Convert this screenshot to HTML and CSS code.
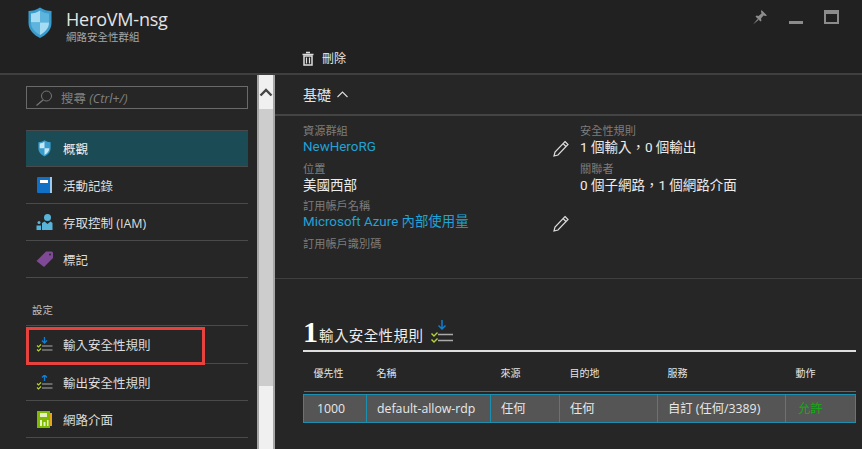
FILE: index.html
```html
<!DOCTYPE html>
<html lang="zh-Hant">
<head>
<meta charset="utf-8">
<title>HeroVM-nsg</title>
<link rel="stylesheet" href="styles.css">
</head>
<body>
<div class="app">
  <header class="top">
    <div class="brand">
      <svg class="brand-icon" width="26" height="32" viewBox="0 0 26 32"><path d="M13 0.5 C9.5 3 5.5 4 1.5 4 V16 C1.5 23 7 28 13 31 C19 28 24.500 23 24.500 16 V4 C20.500 4 16.500 3 13 0.500Z" fill="#3a9bcd"/><path d="M13 3.500 C10 5.500 7 6.500 4 6.500 V15.500 H13Z" fill="#a5dcf3"/><path d="M13 3.500 C16 5.500 19 6.500 22 6.500 V15.500 H13Z" fill="#5db5de"/><path d="M4 15.500 C4 21.500 8.500 25.500 13 28 V15.500Z" fill="#5db5de"/><path d="M22 15.500 C22 21.500 17.500 25.500 13 28 V15.500Z" fill="#a5dcf3"/></svg>
      <div>
        <div class="brand-name">HeroVM-nsg</div>
        <div class="brand-sub">網路安全性群組</div>
      </div>
    </div>
    <div class="win-controls">
      <svg width="16" height="16" viewBox="0 0 16 16"><path d="M9.500 1 L15 6.500 L13.500 7 L11.500 6.500 L9 9.500 L9.500 11.500 L8.500 12.500 L3.500 7.500 L4.500 6.500 L6.500 7 L9.500 4.500 L9 2.500Z M5.500 10 L1 15.500 L6.500 11Z" fill="#8c8c8c"/></svg>
      <span class="win-min"></span>
      <span class="win-max"></span>
    </div>
    <div class="command">
      <svg width="12" height="15" viewBox="0 0 12 15"><path d="M4 1.500H8M0.500 3.500H11.500" stroke="#ddd" stroke-width="1.600" fill="none"/><path d="M2 5H10V14H2Z" fill="none" stroke="#ddd" stroke-width="1.500"/><path d="M4.500 6.500V12.500M7.500 6.500V12.500" stroke="#ddd" stroke-width="1.200"/></svg>
      <span>刪除</span>
    </div>
  </header>

  <div class="body">
    <nav class="side">
      <div class="search">
        <svg width="18" height="16" viewBox="0 0 18 16"><circle cx="11.500" cy="6" r="5" fill="none" stroke="#777" stroke-width="1"/><path d="M8 10 L1.500 15.500" stroke="#777" stroke-width="1.200"/></svg>
        <span>搜尋 <i>(Ctrl+/)</i></span>
      </div>
      <ul class="menu">
        <li class="menu-item active">
          <svg class="mi" width="16" height="17" viewBox="0 0 26 32"><path d="M13 0.500 C9.500 3 5.500 4 1.500 4 V16 C1.500 23 7 28 13 31 C19 28 24.500 23 24.500 16 V4 C20.500 4 16.500 3 13 0.500Z" fill="#3a9bcd"/><path d="M13 3.500 C10 5.500 7 6.500 4 6.500 V15.500 H13Z" fill="#c5e8f7"/><path d="M22 15.500 C22 21.500 17.500 25.500 13 28 V15.500Z" fill="#c5e8f7"/></svg>
          概觀
        </li>
        <li class="menu-item">
          <svg class="mi" width="15" height="16" viewBox="0 0 15 16"><rect width="15" height="16" rx="1" fill="#0f70c5"/><rect x="13" width="2" height="16" fill="#9fc9e8"/><rect x="3" y="3" width="8" height="3" fill="#fff"/></svg>
          活動記錄
        </li>
        <li class="menu-item">
          <svg class="mi" width="16" height="16" viewBox="0 0 16 16"><circle cx="11" cy="3.500" r="3.500" fill="#59b4d9"/><path d="M5.500 16V9L8 7.500L11 10L14 7.500L16 9V16Z" fill="#59b4d9"/><circle cx="2.500" cy="8.500" r="1.500" fill="#59b4d9"/><path d="M0 16V11.500H4.500V16Z" fill="#59b4d9"/></svg>
          存取控制 (IAM)
        </li>
        <li class="menu-item">
          <svg class="mi" width="17" height="16" viewBox="0 0 17 16"><path d="M10 0.500H15.500Q17 0.500 17 2V7L8 16L0.500 10Z" fill="#804998"/><circle cx="14" cy="3.500" r="1" fill="#2b2b2b"/></svg>
          標記
        </li>
      </ul>
      <div class="menu-group">設定</div>
      <ul class="menu menu-settings">
        <li class="menu-item menu-item-first">
          <svg class="mi" width="16" height="15" viewBox="0 0 16 15"><path d="M8 0V6M5.500 3.500L8 6L10.500 3.500" stroke="#0f7fd6" stroke-width="1.300" fill="none"/><path d="M5.500 9H16M5.500 13H16" stroke="#aaa" stroke-width="1.200"/><path d="M0.500 8.500L2 10L4.500 7.500M0.500 12.500L2 14L4.500 11.500" stroke="#b8d432" stroke-width="1.100" fill="none"/></svg>
          輸入安全性規則
          <span class="highlight"></span>
        </li>
        <li class="menu-item">
          <svg class="mi" width="16" height="15" viewBox="0 0 16 15"><path d="M8 6V0M5.500 2.500L8 0L10.500 2.500" stroke="#0f7fd6" stroke-width="1.300" fill="none"/><path d="M5.500 9H16M5.500 13H16" stroke="#aaa" stroke-width="1.200"/><path d="M0.500 8.500L2 10L4.500 7.500M0.500 12.500L2 14L4.500 11.500" stroke="#b8d432" stroke-width="1.100" fill="none"/></svg>
          輸出安全性規則
        </li>
        <li class="menu-item">
          <svg class="mi" width="15" height="17" viewBox="0 0 15 17"><rect width="13" height="17" fill="#7fba00"/><rect x="13" y="2" width="2" height="13" fill="#e8a317"/><rect x="3" y="2" width="7" height="4" fill="#e6f2c4"/><path d="M3 9H5V15H3ZM6.500 11H8.500V15H6.500ZM10 9H11.500V15H10Z" fill="#e6f2c4"/></svg>
          網路介面
        </li>
      </ul>
    </nav>

    <div class="scrollbar">
      <div class="sb-up"><svg width="14" height="9" viewBox="0 0 14 9"><path d="M1.500 7.500L7 2L12.500 7.500" stroke="#444" stroke-width="2.400" fill="none"/></svg></div>
      <div class="sb-thumb"></div>
      <div class="sb-track"></div>
    </div>

    <main class="main">
      <section class="essentials">
        <div class="ess-head">基礎 <svg width="11" height="7" viewBox="0 0 11 7"><path d="M0.500 6L5.500 1L10.500 6" stroke="#ddd" stroke-width="1.100" fill="none"/></svg></div>
        <div class="ess-grid">
          <div class="ess-col">
            <div class="ess-label">資源群組</div>
            <div class="ess-row"><a class="ess-link">NewHeroRG</a><svg class="pencil" width="16" height="17" viewBox="0 0 16 17"><path d="M12 1.500L15 4.500L5 15L1 16L2 12Z M10 3.500L13 6.500" fill="none" stroke="#ddd" stroke-width="1.200"/></svg></div>
            <div class="ess-label">位置</div>
            <div class="ess-value">美國西部</div>
            <div class="ess-label">訂用帳戶名稱</div>
            <div class="ess-row"><a class="ess-link">Microsoft Azure 內部使用量</a><svg class="pencil" width="16" height="17" viewBox="0 0 16 17"><path d="M12 1.500L15 4.500L5 15L1 16L2 12Z M10 3.500L13 6.500" fill="none" stroke="#ddd" stroke-width="1.200"/></svg></div>
            <div class="ess-label">訂用帳戶識別碼</div>
          </div>
          <div class="ess-col">
            <div class="ess-label">安全性規則</div>
            <div class="ess-value">1 個輸入，0 個輸出</div>
            <div class="ess-label">關聯者</div>
            <div class="ess-value">0 個子網路，1 個網路介面</div>
          </div>
        </div>
      </section>
      <section class="rules">
        <h2 class="rules-title"><b>1</b><span>輸入安全性規則</span>
          <svg width="22" height="24" viewBox="0 0 22 24"><path d="M11 0V9M7.500 5.500L11 9L14.500 5.500" stroke="#0f7fd6" stroke-width="1.500" fill="none"/><path d="M7 14.500H22M7 20.500H22" stroke="#aaa" stroke-width="1.600"/><path d="M0.500 13.500L3 16L6.500 12.500M0.500 19.500L3 22L6.500 18.500" stroke="#b8d432" stroke-width="1.400" fill="none"/></svg>
        </h2>
        <table class="rules-table">
          <colgroup><col class="c1"><col class="c2"><col class="c3"><col class="c4"><col class="c5"><col class="c6"></colgroup>
          <thead><tr><th>優先性</th><th>名稱</th><th>來源</th><th>目的地</th><th>服務</th><th>動作</th></tr></thead>
          <tbody>
            <tr class="spacer"><td colspan="6"></td></tr>
            <tr><td class="num">1000</td><td>default-allow-rdp</td><td>任何</td><td>任何</td><td>自訂 (任何/3389)</td><td class="allow">允許</td></tr>
          </tbody>
        </table>
      </section>
    </main>
  </div>
</div>
</body>
</html>
```

FILE: styles.css
```css
* { box-sizing: border-box; }
html, body { margin: 0; height: 100%; }
body {
  background: #262626;
  color: #e6e6e6;
  font-family: "Open Sans", "Noto Sans CJK TC", sans-serif;
  font-size: 12px;
  overflow: hidden;
}
ul { list-style: none; margin: 0; padding: 0; }
.app { width: 862px; height: 449px; display: flex; flex-direction: column; overflow: hidden; }

.top {
  height: 75px;
  flex: none;
  background: #212121;
  border-bottom: 2px solid #3f3f3f;
  display: grid;
  grid-template-columns: 302px 1fr auto;
  grid-template-rows: 44px 1fr;
}
.brand { grid-column: 1 / 3; display: flex; gap: 13px; padding: 7px 0 0 27px; }
.brand-icon { flex: none; }
.brand-name { font-size: 18px; line-height: 20px; margin-top: 2px; color: #e4e4e4; letter-spacing: -0.2px; }
.brand-sub { font-size: 10.500px; line-height: 13px; margin-top: 2px; color: #a6a6a6; }
.win-controls { grid-column: 3; display: flex; align-items: flex-start; gap: 21px; padding: 9px 23px 0 0; }
.win-min { width: 14px; height: 3px; background: #8c8c8c; margin-top: 12px; }
.win-max { width: 15px; height: 14px; border: 2px solid #8c8c8c; border-top-width: 4px; margin-top: 1px; }
.command { grid-column: 2 / 4; grid-row: 2; display: flex; align-items: flex-start; gap: 8px; padding-top: 7px; font-size: 12px; color: #e6e6e6; line-height: 16px; }

.body { flex: 1; display: flex; min-height: 0; }
.side { width: 257px; flex: none; padding: 11px 9px 0 26px; }
.search {
  height: 23px;
  border: 1px solid #6a6a6a;
  display: flex;
  align-items: center;
  gap: 8px;
  padding-left: 8px;
  color: #808080;
  font-size: 12.500px;
}
.search i { font-style: italic; }
.menu { margin-top: 21px; }
.menu-item {
  position: relative;
  height: 37px;
  display: flex;
  align-items: center;
  padding-left: 10px;
  gap: 10px;
  font-size: 12.500px;
  color: #dedede;
  border-bottom: 1px solid #4a4a4a;
}
.menu-item-first { height: 38px; }
.menu-item .mi { flex: none; width: 17px; }
.active { background: #1b4b55; border-top: 1px solid #4a4a4a; color: #eee; height: 37px; }
.menu-group { font-size: 10.500px; color: #bdbdbd; margin-top: 25px; padding-left: 6px; line-height: 14px; height: 22px; }
.menu-settings { margin-top: 0; border-top: 1px solid #4a4a4a; }
.highlight { position: absolute; left: 0; top: 1px; width: 179px; height: 38px; border: 3px solid #e8423f; }

.scrollbar { width: 18px; flex: none; display: flex; flex-direction: column; background: #f0f0f0; border: 1px solid #a6a6a6; border-width: 0 2px; }
.sb-up { height: 34px; display: flex; align-items: center; justify-content: center; }
.sb-thumb { height: 277px; background: #cdcdcd; }
.sb-track { flex: 1; }

.main { flex: 1; min-width: 0; }
.essentials { height: 204px; border-bottom: 1px solid #3f3f3f; padding: 0 0 0 28px; }
.ess-head {
  height: 41px;
  margin-left: -28px;
  padding: 10px 0 0 28px;
  font-size: 14px;
  line-height: 20px;
  border-bottom: 2px solid #444;
  color: #e2e2e2;
  display: flex;
  gap: 6px;
}
.ess-head svg { margin-top: 6px; }
.ess-grid { display: grid; grid-template-columns: 277px 1fr; padding-top: 7px; }
.ess-col { min-width: 0; }
.ess-label { font-size: 11.200px; line-height: 15px; color: #7d7d7d; margin-top: 4.500px; }
.ess-col .ess-label:first-child { margin-top: 0; }
.ess-value { font-family: Roboto, "Noto Sans CJK TC", sans-serif; font-size: 13.500px; line-height: 18px; color: #ececec; }
.ess-row { font-family: Roboto, "Noto Sans CJK TC", sans-serif; display: flex; justify-content: space-between; align-items: center; font-size: 13.400px; line-height: 18px; height: 18px; padding-right: 11px; }
.ess-link { color: #1fa3d8; }
.pencil { flex: none; margin-top: 2px; }

.rules { padding: 38px 6px 0 28px; }
.rules-title {
  margin: 0;
  height: 35px;
  display: flex;
  align-items: flex-end;
  font-weight: 400;
  font-size: 14.500px;
  color: #ececec;
  border-bottom: 2px solid #dedede;
  padding-bottom: 4px;
}
.rules-title b { font-family: "Liberation Serif", serif; font-size: 30px; line-height: 28px; color: #fff; font-weight: 700; margin-right: 1px; }
.rules-title span { line-height: 20px; letter-spacing: 0.4px; }
.rules-title svg { margin: 0 0 2px 8px; }

.rules-table { width: 552px; table-layout: fixed; border-collapse: collapse; }
.c1 { width: 63px; } .c2 { width: 124px; } .c3 { width: 69px; } .c4 { width: 98px; } .c5 { width: 128px; } .c6 { width: 70px; }
.rules-table th {
  height: 39px;
  padding: 2px 0 0 10px;
  text-align: left;
  font-size: 10px;
  font-weight: 400;
  color: #e4e4e4;
  border-bottom: 1px solid #1d7f98;
}
.rules-table td {
  height: 28px;
  padding: 0 0 0 10px;
  background: #555;
  border: 1px solid #1d8fae;
  font-size: 12.300px;
  color: #e8e8e8;
}
.rules-table .spacer td { height: 3px; padding: 0; background: none; border-width: 0; }
.rules-table td.num { padding-left: 13px; }
.rules-table td.allow { color: #15a815; padding-left: 12px; }
```
